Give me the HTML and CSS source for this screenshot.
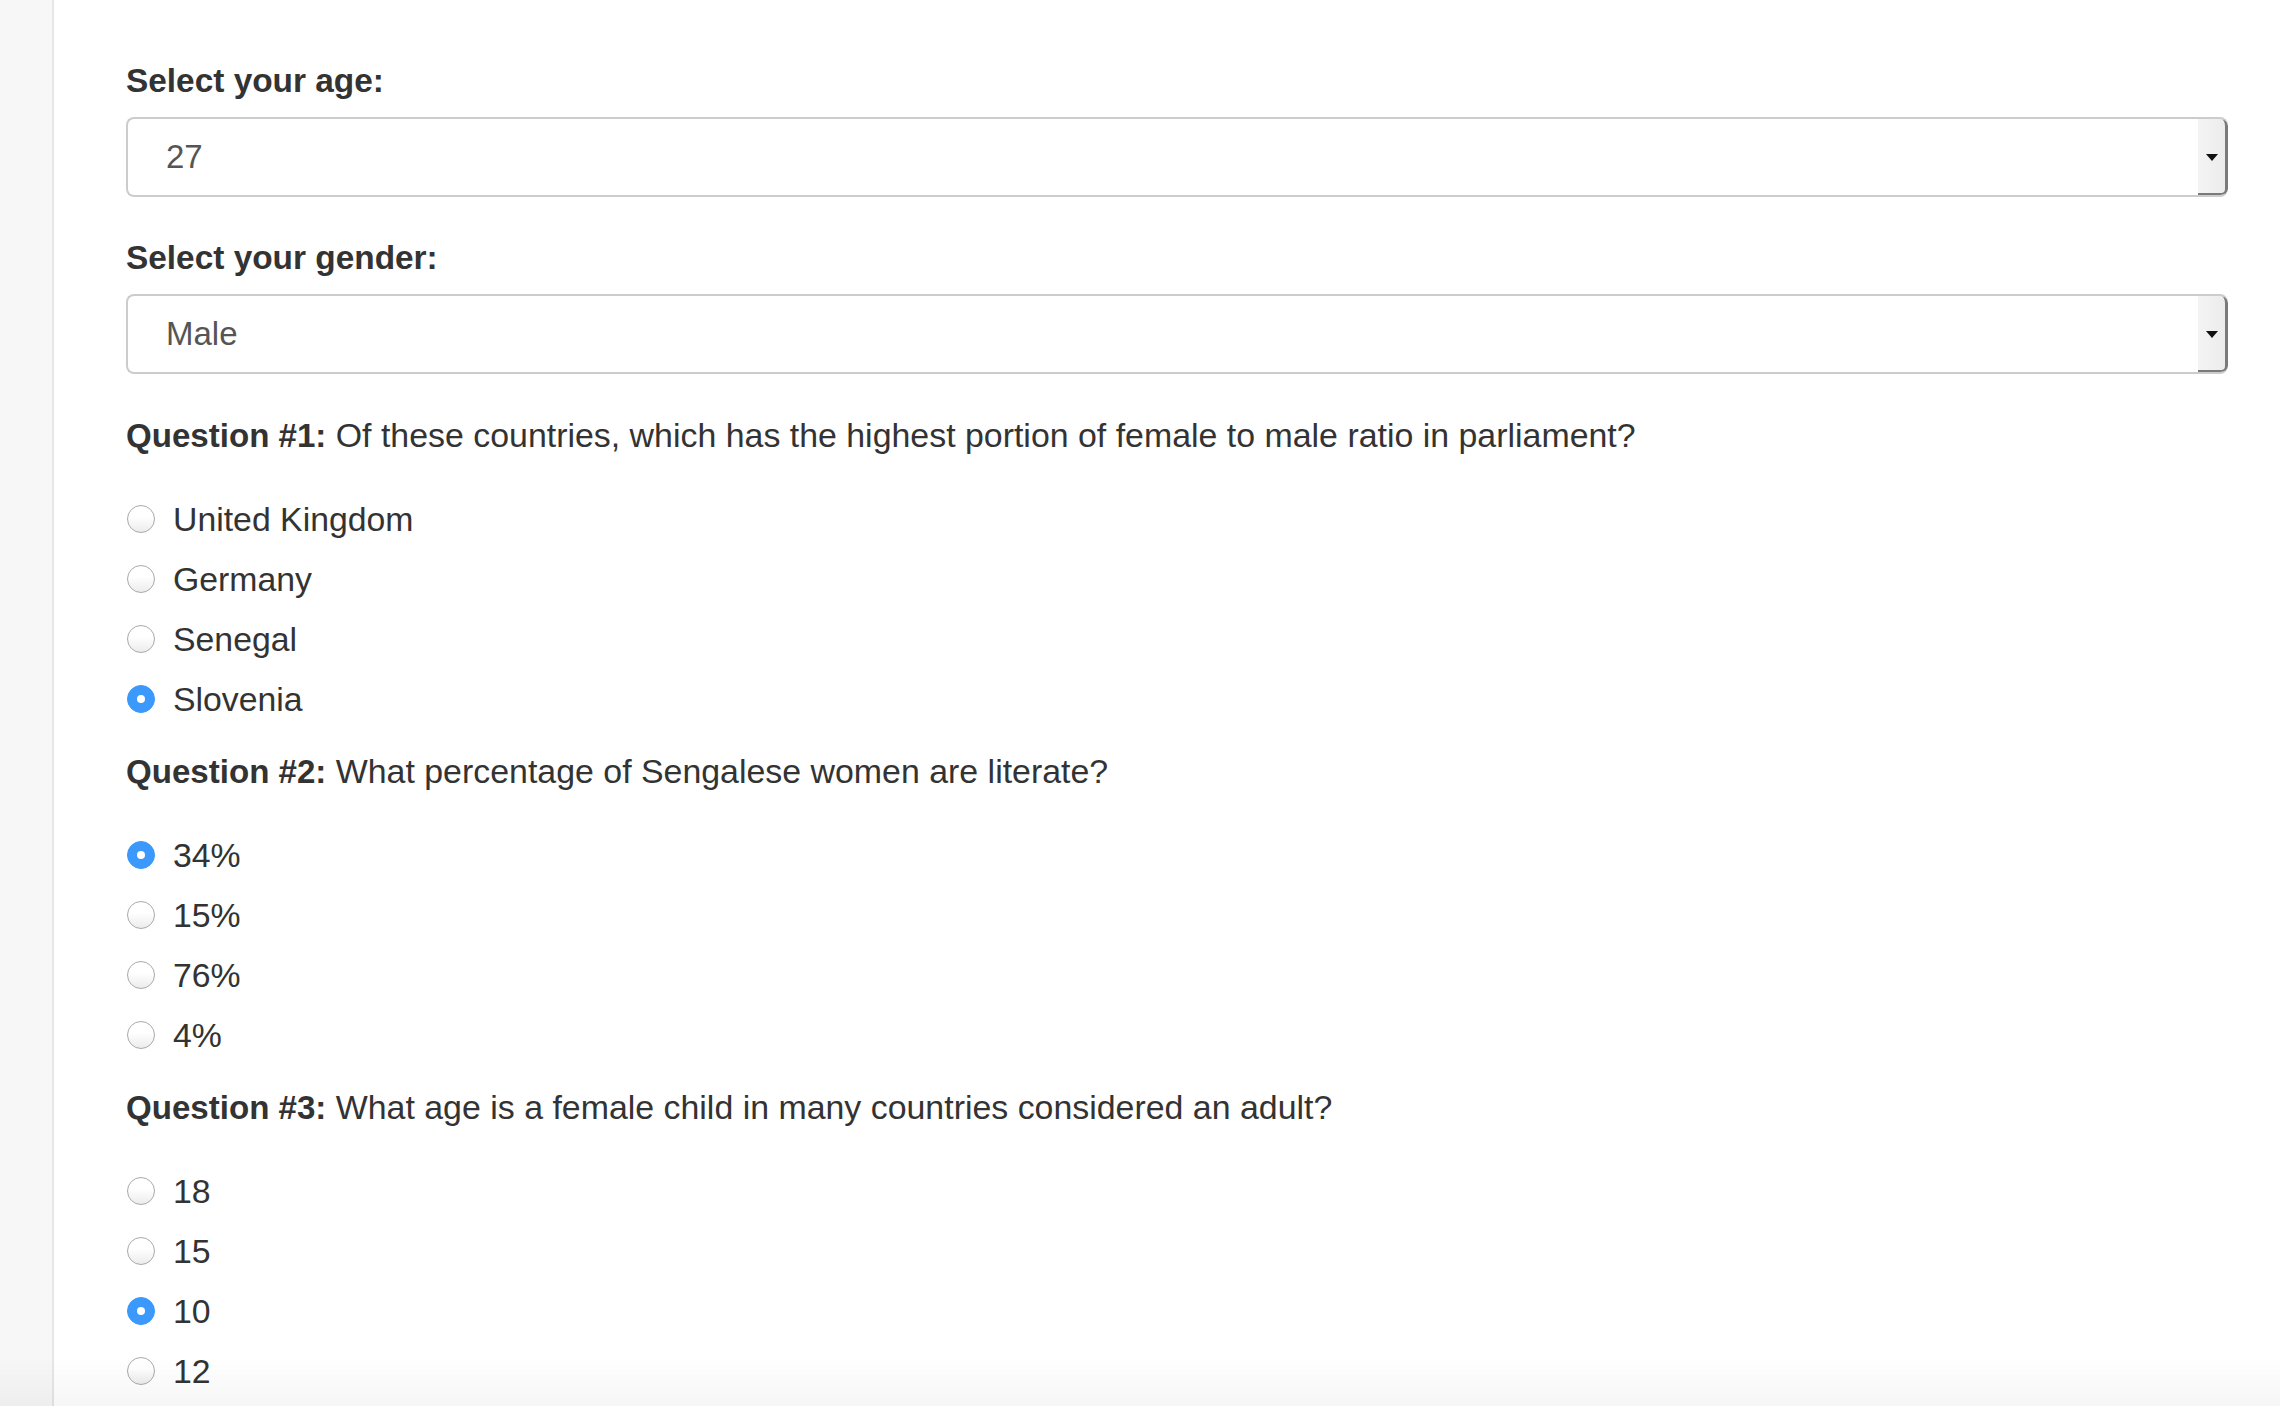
FILE: index.html
```html
<!DOCTYPE html>
<html lang="en">
<head>
<meta charset="utf-8">
<title>Survey</title>
<link rel="stylesheet" href="styles.css">
</head>
<body>
<div class="page">
  <aside class="sidebar"></aside>
  <main class="main">
    <div class="field">
      <label class="field-label">Select your age:</label>
      <div class="select">
        <span class="select-value">27</span>
        <span class="select-btn"><span class="caret"></span></span>
      </div>
    </div>
    <div class="field">
      <label class="field-label">Select your gender:</label>
      <div class="select">
        <span class="select-value">Male</span>
        <span class="select-btn"><span class="caret"></span></span>
      </div>
    </div>

    <section class="question q-first">
      <p class="q-text"><b>Question #1:</b> Of these countries, which has the highest portion of female to male ratio in parliament?</p>
      <ul class="options">
        <li class="option"><span class="radio"></span><span class="opt-label">United Kingdom</span></li>
        <li class="option"><span class="radio"></span><span class="opt-label">Germany</span></li>
        <li class="option"><span class="radio"></span><span class="opt-label">Senegal</span></li>
        <li class="option"><span class="radio checked"></span><span class="opt-label">Slovenia</span></li>
      </ul>
    </section>

    <section class="question">
      <p class="q-text"><b>Question #2:</b> What percentage of Sengalese women are literate?</p>
      <ul class="options">
        <li class="option"><span class="radio checked"></span><span class="opt-label">34%</span></li>
        <li class="option"><span class="radio"></span><span class="opt-label">15%</span></li>
        <li class="option"><span class="radio"></span><span class="opt-label">76%</span></li>
        <li class="option"><span class="radio"></span><span class="opt-label">4%</span></li>
      </ul>
    </section>

    <section class="question">
      <p class="q-text"><b>Question #3:</b> What age is a female child in many countries considered an adult?</p>
      <ul class="options">
        <li class="option"><span class="radio"></span><span class="opt-label">18</span></li>
        <li class="option"><span class="radio"></span><span class="opt-label">15</span></li>
        <li class="option"><span class="radio checked"></span><span class="opt-label">10</span></li>
        <li class="option"><span class="radio"></span><span class="opt-label">12</span></li>
      </ul>
    </section>
  </main>
</div>
<div class="bottom-fade"></div>
</body>
</html>
```

FILE: styles.css
```css
html, body {
  margin: 0;
  padding: 0;
  background: #fff;
}

body {
  font-family: "Liberation Sans", Arial, sans-serif;
  color: #333;
  height: 1406px;
  overflow: hidden;
}

.page {
  display: flex;
  min-height: 1406px;
}

.sidebar {
  width: 52px;
  flex: 0 0 52px;
  background: #f7f7f7;
  border-right: 2px solid #e6e6e6;
}

.main {
  flex: 1;
  padding: 61px 52px 0 72px;
}

.field {
  margin-bottom: 41px;
}

.field-label {
  display: block;
  font-weight: bold;
  font-size: 33.4px;
  line-height: 40px;
  margin-bottom: 16px;
  color: #333;
}

.select {
  display: flex;
  align-items: stretch;
  height: 80px;
  box-sizing: border-box;
  border: 2px solid #cccccc;
  border-right: 0;
  border-radius: 8px;
  background: #fff;
  overflow: hidden;
}

.select-value {
  flex: 1;
  display: flex;
  align-items: center;
  padding-left: 38px;
  font-size: 33px;
  color: #555;
}

.select-btn {
  width: 27px;
  display: flex;
  align-items: center;
  justify-content: center;
  background: linear-gradient(to right, #f4f4f4, #ececec);
  border-right: 3px solid #7a7a7a;
  border-bottom: 3px solid #7a7a7a;
  border-bottom-right-radius: 7px;
  border-top-right-radius: 7px;
  margin-bottom: -1px;
}

.caret {
  width: 0;
  height: 0;
  border-left: 6px solid transparent;
  border-right: 6px solid transparent;
  border-top: 7px solid #111;
  margin-top: 2px;
}

.question {
  margin-top: 22px;
}

.q-first {
  margin-top: 4px;
}

.q-text {
  margin: 0 0 34px 0;
  font-size: 33.9px;
  line-height: 40px;
  height: 40px;
  color: #333;
}

.q-text b {
  font-weight: bold;
  font-size: 33.1px;
  line-height: 1;
}

.options {
  list-style: none;
  margin: 0;
  padding: 0;
}

.option {
  display: flex;
  align-items: center;
  height: 60px;
  font-size: 33.8px;
  line-height: 60px;
}

.radio {
  width: 28px;
  height: 28px;
  box-sizing: border-box;
  border-radius: 50%;
  border: 1.5px solid #a9a9a9;
  background: linear-gradient(#ffffff 40%, #ececec);
  margin-left: 1px;
  margin-right: 18px;
  position: relative;
  flex: 0 0 28px;
}

.radio.checked {
  border-color: #3b99fc;
  background: #3b99fc;
}

.radio.checked::after {
  content: "";
  position: absolute;
  left: 50%;
  top: 50%;
  width: 8px;
  height: 8px;
  margin: -4px 0 0 -4px;
  border-radius: 50%;
  background: #fff;
}

.opt-label {
  color: #333;
}

.bottom-fade {
  position: fixed;
  left: 0;
  right: 0;
  bottom: 0;
  height: 50px;
  background: linear-gradient(to bottom, rgba(0,0,0,0), rgba(0,0,0,0.035));
  pointer-events: none;
}
```
